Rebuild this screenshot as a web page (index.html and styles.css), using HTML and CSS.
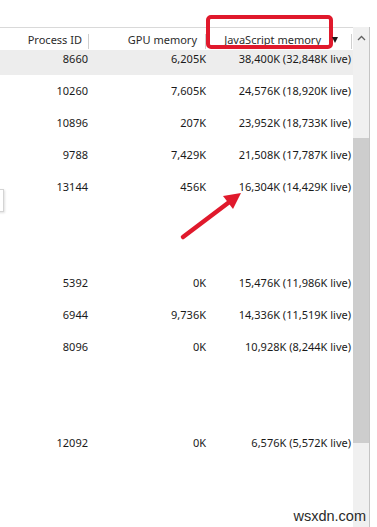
FILE: index.html
```html
<!DOCTYPE html>
<html>
<head>
<meta charset="utf-8">
<link rel="stylesheet" href="styles.css">
</head>
<body>
<div class="app">
  <div class="table">
    <div class="header">
      <div class="hcell"><span class="label">Process ID</span><span class="sep"></span></div>
      <div class="hcell"><span class="label">GPU memory</span><span class="sep sep-gpu"></span></div>
      <div class="hcell"><span class="label">JavaScript memory</span><span class="sort"></span><span class="sep sep-js"></span></div>
    </div>
    <div class="rows">
      <div class="row selected"><span>8660</span><span>6,205K</span><span>38,400K (32,848K live)</span></div>
      <div class="row"><span>10260</span><span>7,605K</span><span>24,576K (18,920K live)</span></div>
      <div class="row"><span>10896</span><span>207K</span><span>23,952K (18,733K live)</span></div>
      <div class="row"><span>9788</span><span>7,429K</span><span>21,508K (17,787K live)</span></div>
      <div class="row"><span>13144</span><span>456K</span><span>16,304K (14,429K live)</span></div>
      <div class="row"><span></span><span></span><span></span></div>
      <div class="row"><span></span><span></span><span></span></div>
      <div class="row"><span>5392</span><span>0K</span><span>15,476K (11,986K live)</span></div>
      <div class="row"><span>6944</span><span>9,736K</span><span>14,336K (11,519K live)</span></div>
      <div class="row"><span>8096</span><span>0K</span><span>10,928K (8,244K live)</span></div>
      <div class="row"><span></span><span></span><span></span></div>
      <div class="row"><span></span><span></span><span></span></div>
      <div class="row"><span>12092</span><span>0K</span><span>6,576K (5,572K live)</span></div>
    </div>
  </div>
  <div class="scrollbar">
    <div class="sb-button">
      <svg width="9" height="6" viewBox="0 0 9 6"><path d="M1 5 L4.5 1.5 L8 5" fill="none" stroke="#606060" stroke-width="1.3"/></svg>
    </div>
    <div class="sb-track"><div class="sb-thumb"></div></div>
  </div>
</div>

<div class="tooltip-edge"></div>
<div class="highlight-box"></div>
<svg class="arrow" width="377" height="527" viewBox="0 0 377 527">
  <line x1="183" y1="237" x2="230" y2="201.5" stroke="#e0192c" stroke-width="4.5" stroke-linecap="round"/>
  <polygon points="241,193 233,209 223,196" fill="#e0192c"/>
</svg>
<div class="watermark">wsxdn.com</div>
</body>
</html>
```

FILE: styles.css
```css
html, body {
  margin: 0;
  padding: 0;
  background: #ffffff;
}
body {
  width: 377px;
  height: 527px;
  overflow: hidden;
  position: relative;
  font-family: "Noto Sans", "Open Sans", sans-serif;
  font-size: 11px;
  color: #1a1a1a;
}
.app {
  display: flex;
  padding-top: 27px;
  height: 500px;
}
.table {
  width: 353px;
  flex: none;
}
.header {
  display: grid;
  grid-template-columns: 89px 117px 147px;
  height: 22px;
  border-top: 1px solid #d9d9d9;
}
.hcell {
  display: flex;
  justify-content: flex-end;
  align-items: center;
  padding-top: 2px;
  color: #2b2b2b;
}
.label {
  line-height: 16px;
  margin-right: 6px;
}
.sep {
  width: 1px;
  height: 15px;
  background: #cfcfcf;
  margin-top: 2px;
}
.sep-gpu {
  margin-left: 1px;
}
.hcell:nth-child(2) .label {
  margin-right: 7px;
}
.hcell:nth-child(3) .label {
  margin-right: 11px;
}
.sort {
  width: 0;
  height: 0;
  border-left: 3px solid transparent;
  border-right: 3px solid transparent;
  border-top: 6px solid #1a1a1a;
  margin-right: 13px;
  position: relative;
  z-index: 2;
}
.sep-js {
  margin-right: 1px;
}
.rows {
  display: flex;
  flex-direction: column;
  gap: 7px;
}
.row {
  display: grid;
  grid-template-columns: 89px 117px 147px;
  height: 25px;
  line-height: 18px;
}
.row span {
  text-align: right;
  white-space: nowrap;
}
.row span:nth-child(1) { padding-right: 1px; }
.row span:nth-child(2) { padding-right: 0; }
.row span:nth-child(3) { padding-right: 2px; }
.row.selected {
  background: #ededed;
}
.scrollbar {
  width: 16px;
  flex: none;
  background: #f0f0f0;
  border-right: 1px solid #c4c4c4;
  display: flex;
  flex-direction: column;
  height: 500px;
}
.sb-button {
  height: 17px;
  display: flex;
  justify-content: center;
  align-items: center;
  padding-top: 2px;
}
.sb-track {
  flex: 1;
}
.sb-thumb {
  margin-top: 92px;
  height: 305px;
  background: #cdcdcd;
}
.tooltip-edge {
  position: absolute;
  left: -20px;
  top: 189px;
  width: 22px;
  height: 21px;
  border: 1px solid #d4d4d4;
  background: #ffffff;
  box-shadow: 1px 1px 2px rgba(0,0,0,0.12);
}
.highlight-box {
  position: absolute;
  left: 206px;
  top: 15px;
  width: 119px;
  height: 26px;
  border: 4px solid #e0192c;
  border-radius: 5px;
  z-index: 1;
}
.arrow {
  position: absolute;
  left: 0;
  top: 0;
  pointer-events: none;
}
.watermark {
  position: absolute;
  right: 11px;
  bottom: 3px;
  font-family: "Liberation Sans", Arial, sans-serif;
  font-size: 14.5px;
  color: #2a2a2a;
}
```
